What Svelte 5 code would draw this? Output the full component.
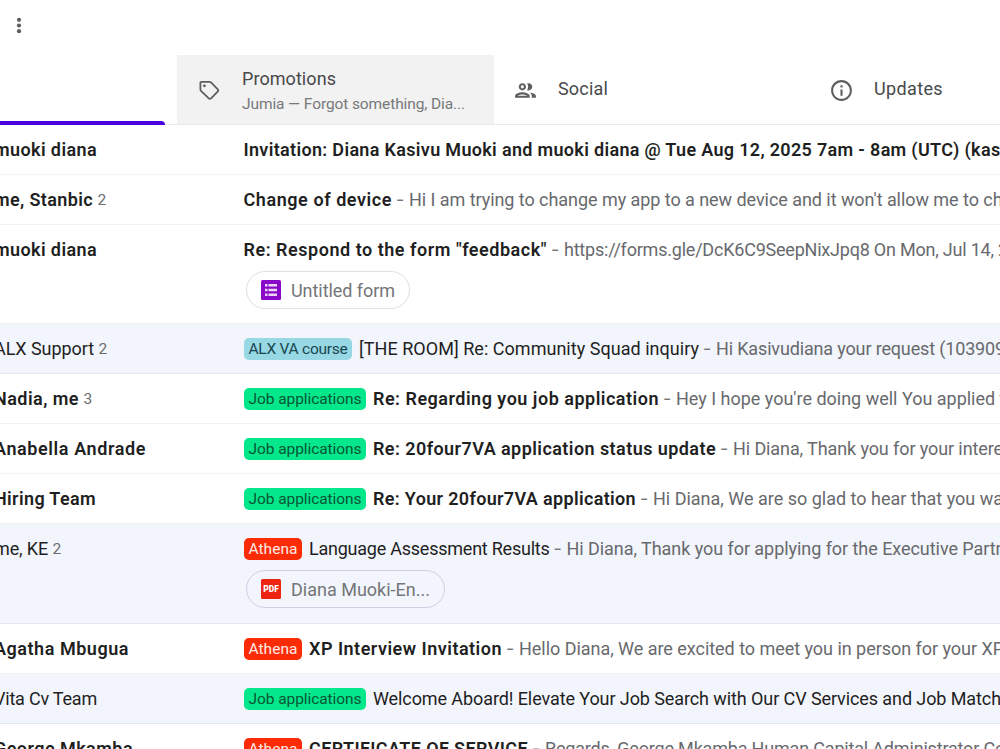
<script lang="ts">
    type Tone = 'sky' | 'green' | 'red';

    interface Run {
        text: string;
        width: number;
    }

    interface Mail {
        sender: Run;
        count?: number;
        read?: boolean;
        label?: Run & { tone: Tone };
        subject: Run;
        snippet?: Run;
        file?: Run & { kind: 'form' | 'pdf' };
    }

    const jobs = { text: 'Job applications', width: 113, tone: 'green' as Tone };
    const athena = { text: 'Athena', width: 49, tone: 'red' as Tone };

    const mails: Mail[] = [
        {
            sender: { text: 'muoki diana', width: 103 },
            subject: { text: 'Invitation: Diana Kasivu Muoki and muoki diana @ Tue Aug 12, 2025 7am - 8am (UTC) (kas', width: 757 },
        },
        {
            sender: { text: 'me, Stanbic', width: 99 },
            count: 2,
            subject: { text: 'Change of device', width: 148.5 },
            snippet: { text: "Hi I am trying to change my app to a new device and it won't allow me to ch", width: 593.5 },
        },
        {
            sender: { text: 'muoki diana', width: 103 },
            subject: { text: 'Re: Respond to the form "feedback"', width: 303.5 },
            snippet: { text: 'https://forms.gle/DcK6C9SeepNixJpq8 On Mon, Jul 14, 2', width: 444 },
            file: { text: 'Untitled form', width: 104, kind: 'form' },
        },
        {
            sender: { text: 'ALX Support', width: 100 },
            count: 2,
            read: true,
            label: { text: 'ALX VA course', width: 99, tone: 'sky' },
            subject: { text: '[THE ROOM] Re: Community Squad inquiry', width: 340 },
            snippet: { text: 'Hi Kasivudiana your request (103909', width: 289 },
        },
        {
            sender: { text: 'Nadia, me', width: 85 },
            count: 3,
            label: jobs,
            subject: { text: 'Re: Regarding you job application', width: 286 },
            snippet: { text: "Hey I hope you're doing well You applied t", width: 329.5 },
        },
        {
            sender: { text: 'Anabella Andrade', width: 152 },
            label: jobs,
            subject: { text: 'Re: 20four7VA application status update', width: 343 },
            snippet: { text: 'Hi Diana, Thank you for your intere', width: 270 },
        },
        {
            sender: { text: 'Hiring Team', width: 102 },
            label: jobs,
            subject: { text: 'Re: Your 20four7VA application', width: 263 },
            snippet: { text: 'Hi Diana, We are so glad to hear that you wa', width: 350 },
        },
        {
            sender: { text: 'me, KE', width: 54 },
            count: 2,
            read: true,
            label: athena,
            subject: { text: 'Language Assessment Results', width: 240.5 },
            snippet: { text: 'Hi Diana, Thank you for applying for the Executive Partn', width: 439 },
            file: { text: 'Diana Muoki-En...', width: 139, kind: 'pdf' },
        },
        {
            sender: { text: 'Agatha Mbugua', width: 135 },
            label: athena,
            subject: { text: 'XP Interview Invitation', width: 193 },
            snippet: { text: 'Hello Diana, We are excited to meet you in person for your XP', width: 485 },
        },
        {
            sender: { text: 'Vita Cv Team', width: 103 },
            read: true,
            label: jobs,
            subject: { text: 'Welcome Aboard! Elevate Your Job Search with Our CV Services and Job Match', width: 628 },
        },
        {
            sender: { text: 'George Mkamba', width: 139 },
            label: athena,
            subject: { text: 'CERTIFICATE OF SERVICE', width: 219 },
            snippet: { text: 'Regards, George Mkamba Human Capital Administrator Co', width: 460 },
        },
    ];

    // Tracks the letters so that a run of text takes exactly the given width
    function fit(node: HTMLElement, width: number) {
        const natural = node.getBoundingClientRect().width;
        const letters = node.textContent?.length ?? 1;
        node.style.letterSpacing = `${(width - natural) / letters}px`;
    }
</script>

<div class="inbox">
    <div class="toolbar">
        <svg width="6" height="18" viewBox="0 0 6 18" fill="#5c5e60">
            <circle cx="3" cy="2.8" r="2.1" />
            <circle cx="3" cy="8.500" r="2.1" />
            <circle cx="3" cy="14.2" r="2.1" />
        </svg>
    </div>

    <div class="tabs">
        <div class="tab tab--active"><span class="marker"></span></div>
        <div class="tab tab--hover">
            <svg width="25" height="25" viewBox="0 0 25 25" fill="none" stroke="#5c5e60" stroke-width="1.8" stroke-linejoin="round">
                <path d="M4.300 3.800h8.200c.6 0 1.100.2 1.500.6l6.600 6.700c.8.8.8 1.700 0 2.500l-6.500 6.800c-.7.7-1.600.7-2.300 0L4 12.800c-.4-.4-.6-.9-.6-1.500V4.700c0-.5.4-.9.9-.9z" />
                <circle cx="7.400" cy="7.800" r="1.400" fill="#5c5e60" stroke="none" />
            </svg>
            <div class="names">
                <span class="name" use:fit={94}>Promotions</span>
                <span class="teaser" use:fit={223}>Jumia — Forgot something, Dia...</span>
            </div>
        </div>
        <div class="tab">
            <svg width="25" height="25" viewBox="0 0 24 24" fill="#5c5e60">
                <path d="M9 12c1.930 0 3.500-1.570 3.500-3.500S10.930 5 9 5 5.500 6.570 5.500 8.500 7.070 12 9 12zm0-5c.83 0 1.500.67 1.500 1.500S9.830 10 9 10s-1.500-.67-1.500-1.500S8.170 7 9 7zm0 6.750c-2.340 0-7 1.170-7 3.500V19h14v-1.750c0-2.330-4.660-3.500-7-3.500zM4.340 17c.84-.58 2.870-1.250 4.660-1.250s3.820.67 4.660 1.250H4.340zm11.700-3.190c1.160.84 1.960 1.960 1.960 3.440V19h4v-1.750c0-2.020-3.500-3.170-5.960-3.440zM15 12c1.930 0 3.500-1.570 3.500-3.500S16.930 5 15 5c-.54 0-1.040.13-1.500.35.63.89 1 1.980 1 3.150s-.37 2.260-1 3.150c.46.22.96.35 1.500.35z" />
            </svg>
            <span class="name" use:fit={50}>Social</span>
        </div>
        <div class="tab">
            <svg width="25" height="25" viewBox="0 0 24 24" fill="#5c5e60">
                <path d="M11 7h2v2h-2zm0 4h2v6h-2zm1-9C6.480 2 2 6.480 2 12s4.480 10 10 10 10-4.480 10-10S17.520 2 12 2zm0 18c-4.410 0-8-3.590-8-8s3.590-8 8-8 8 3.590 8 8-3.590 8-8 8z" />
            </svg>
            <span class="name" use:fit={69}>Updates</span>
        </div>
    </div>

    {#each mails as mail}
        <div class="mail" class:mail--read={mail.read} class:mail--form={mail.file?.kind === 'form'} class:mail--pdf={mail.file?.kind === 'pdf'}>
            <div class="from">
                <span class="sender" use:fit={mail.sender.width}>{mail.sender.text}</span>
                {#if mail.count}<span class="count">{mail.count}</span>{/if}
            </div>
            <div class="body">
                <div class="line">
                    {#if mail.label}
                        <span class="label label--{mail.label.tone}"><span use:fit={mail.label.width}>{mail.label.text}</span></span>
                    {/if}
                    <span class="subject" use:fit={mail.subject.width}>{mail.subject.text}</span>
                    {#if mail.snippet}
                        <span class="dash">-</span>
                        <span class="snippet" use:fit={mail.snippet.width}>{mail.snippet.text}</span>
                    {/if}
                </div>
                {#if mail.file}
                    <div class="file">
                        {#if mail.file.kind === 'form'}
                            <svg width="20" height="20" viewBox="0 0 20 20">
                                <rect width="20" height="20" rx="1.5" fill="#8a08c8" />
                                <path d="M4 4h2.500v2.500H4zm3.500 0H16v2.500H7.500zM4 8.700h2.500v2.500H4zm3.500 0H16v2.500H7.500zM4 13.400h2.500v2.500H4zm3.500 0H16v2.500H7.500z" fill="#edd6f8" />
                            </svg>
                        {:else}
                            <span class="pdf">PDF</span>
                        {/if}
                        <span use:fit={mail.file.width}>{mail.file.text}</span>
                    </div>
                {/if}
            </div>
        </div>
    {/each}
</div>

<style>
    :global(body) {
        overflow: hidden;
        background: #fff;
    }

    .inbox {
        width: 1000px;
        height: 749px;
        overflow: hidden;
        font-family: Roboto, "Liberation Sans", sans-serif;
        font-size: 18px;
        color: #1f1f1f;
        white-space: nowrap;
    }

    .inbox span {
        flex: none;
    }

    .toolbar {
        box-sizing: border-box;
        height: 55px;
        padding: 17px 0 0 15.5px;
    }

    .toolbar svg {
        display: block;
    }

    .tabs {
        display: grid;
        grid-template-columns: 177px 316.500px 316px 316px;
        height: 69px;
        border-bottom: 1px solid #e9eaec;
    }

    .tab {
        display: flex;
        align-items: center;
        gap: 20px;
        padding-left: 19.500px;
        color: #47494b;
    }

    .tab svg {
        margin-top: 2px;
    }

    .tab .name {
        margin-top: -2px;
    }

    .tab--active {
        align-items: flex-end;
        padding-left: 0;
    }

    .marker {
        width: 165px;
        height: 4px;
        margin-bottom: -1px;
        border-radius: 0 4px 0 0;
        background: #4b00e0;
    }

    .tab--hover {
        background: #f2f2f2;
    }

    .names {
        display: flex;
        flex-direction: column;
        align-items: flex-start;
        gap: 5px;
        margin: 5px 0 0 0.500px;
        line-height: 20px;
    }

    .teaser {
        font-size: 15.500px;
        color: #77797b;
    }

    .mail {
        display: grid;
        grid-template-columns: 249.500px 1fr;
        box-sizing: border-box;
        height: 50px;
        margin-left: -6px;
        border-bottom: 1px solid #f1f2f4;
    }

    .mail--form {
        height: 99px;
    }

    .mail--pdf {
        height: 100px;
    }

    .mail--read {
        background: #f2f5fc;
        border-bottom-color: #e4e6f2;
    }

    .from,
    .line {
        display: flex;
        align-items: center;
        height: 49px;
    }

    .body {
        min-width: 0;
    }

    .sender,
    .subject {
        font-weight: 600;
    }

    .mail--read .sender,
    .mail--read .subject {
        font-weight: 400;
    }

    .count {
        margin-left: 4.500px;
        font-size: 15.500px;
        color: #6b6d70;
    }

    .label {
        display: flex;
        align-items: center;
        height: 22px;
        margin: 1px 7.500px 0 0.500px;
        padding: 0 4px 0 4.500px;
        border-radius: 5px;
        font-size: 15.500px;
    }

    .label--sky {
        background: #98d7e4;
        color: #17474f;
    }

    .label--green {
        background: #04e78b;
        color: #075635;
    }

    .label--red {
        background: #fb2c05;
        color: #ffe9e5;
    }

    .dash {
        width: 8px;
        margin: 0 5px 0 4px;
        font-family: Inter, sans-serif;
        color: #747679;
    }

    .snippet {
        color: #68696d;
    }

    .file {
        display: inline-flex;
        align-items: center;
        gap: 10px;
        box-sizing: border-box;
        height: 38px;
        margin: -3px 0 0 2.500px;
        padding: 0 14px;
        border: 1.500px solid #dde0e7;
        border-radius: 19px;
        color: #747578;
    }

    .mail--read .file {
        border-color: #cdd0e2;
    }

    .pdf {
        width: 20px;
        height: 20px;
        border-radius: 1.500px;
        background: #ec2410;
        color: #fff;
        font-size: 8.500px;
        font-weight: 900;
        line-height: 21px;
        text-align: center;
    }
</style>
